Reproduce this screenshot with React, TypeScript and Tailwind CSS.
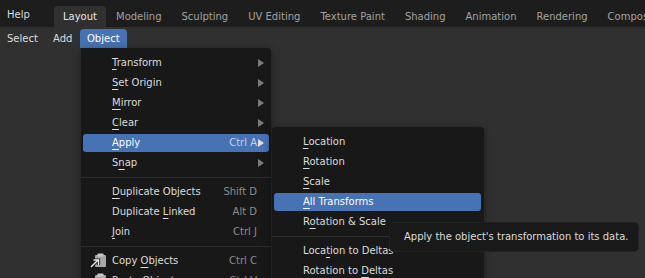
import React from "react";

type Item = {
  label: string;
  key?: number; // index of the underlined accelerator char
  shortcut?: string;
  sub?: boolean;
  active?: boolean;
  icon?: "copy" | "paste";
};

const objectMenu: (Item | "sep")[] = [
  { label: "Transform", key: 0, sub: true },
  { label: "Set Origin", key: 0, sub: true },
  { label: "Mirror", key: 0, sub: true },
  { label: "Clear", key: 0, sub: true },
  { label: "Apply", key: 0, shortcut: "Ctrl A", sub: true, active: true },
  { label: "Snap", key: 1, sub: true },
  "sep",
  { label: "Duplicate Objects", key: 0, shortcut: "Shift D" },
  { label: "Duplicate Linked", key: 10, shortcut: "Alt D" },
  { label: "Join", key: 0, shortcut: "Ctrl J" },
  "sep",
  { label: "Copy Objects", key: 5, shortcut: "Ctrl C", icon: "copy" },
  { label: "Paste Objects", key: 0, shortcut: "Ctrl V", icon: "paste" },
];

const applyMenu: (Item | "sep")[] = [
  { label: "Location", key: 0 },
  { label: "Rotation", key: 0 },
  { label: "Scale", key: 0 },
  { label: "All Transforms", key: 0, active: true },
  { label: "Rotation & Scale", key: 1 },
  "sep",
  { label: "Location to Deltas", key: 4 },
  { label: "Rotation to Deltas", key: 12 },
];

const tabs = ["Layout", "Modeling", "Sculpting", "UV Editing", "Texture Paint", "Shading", "Animation", "Rendering", "Compositing"];

function Label({ text, k }: { text: string; k?: number }) {
  if (k === undefined) return <span>{text}</span>;
  return (
    <span className="whitespace-pre">
      {text.slice(0, k)}
      <span className="underline decoration-1 underline-offset-[3px]">{text[k]}</span>
      {text.slice(k + 1)}
    </span>
  );
}

function ClipboardIcon({ arrow }: { arrow?: boolean }) {
  return (
    <svg width="18" height="16" viewBox="0 0 18 16" className="absolute left-[6px] top-[1px]">
      <rect x="6" y="2" width="11" height="12" rx="1.2" fill="#a8a8a8" />
      <rect x="8.5" y="0.5" width="6" height="3" rx="0.8" fill="#c8c8c8" />
      {arrow && (
        <>
          <path d="M2 14 L9 7" stroke="#181818" strokeWidth="3.2" />
          <path d="M4.5 7 H9.5 V12" stroke="#181818" strokeWidth="3.2" fill="none" />
          <path d="M2 14 L9 7" stroke="#ececec" strokeWidth="1.4" />
          <path d="M4.5 7 H9.5 V12" stroke="#ececec" strokeWidth="1.4" fill="none" />
        </>
      )}
    </svg>
  );
}

function Arrow({ light }: { light?: boolean }) {
  return (
    <svg width="6" height="8" viewBox="0 0 6 8" className="absolute right-[5px] top-[5px]">
      <path d="M0 0 L6 4 L0 8 Z" fill={light ? "#e0e0e0" : "#7c7c7c"} />
    </svg>
  );
}

function Menu({ items, right }: { items: (Item | "sep")[]; right: string }) {
  return (
    <div className="flex flex-col pt-[5px]">
      {items.map((it, i) =>
        it === "sep" ? (
          <div key={i} className="h-[9px] flex items-center">
            <div className="h-px w-full bg-[#2e2e2e]" />
          </div>
        ) : (
          <div key={i} className={`h-5 py-px pl-[2px] ${right}`}>
            <div
              className={`relative h-full flex items-center rounded-[3px] pl-[29px] pr-[12px] ${
                it.active ? "bg-[#4772b3] text-white" : "text-[#dcdcdc]"
              }`}
            >
              {it.icon && <ClipboardIcon arrow={it.icon === "copy"} />}
              <span className="flex-1">
                <Label text={it.label} k={it.key} />
              </span>
              {it.shortcut && (
                <span className={it.active ? "text-[#c6d3e8]" : "text-[#8c8c8c]"}>{it.shortcut}</span>
              )}
              {it.sub && <Arrow light={it.active} />}
            </div>
          </div>
        )
      )}
    </div>
  );
}

export default function App() {
  return (
    <div
      className="relative w-[645px] h-[278px] overflow-hidden flex flex-col bg-[#303030] text-[10px] leading-none text-[#dcdcdc]"
      style={{ fontFamily: '"DejaVu Sans", sans-serif' }}
    >
      {/* top bar */}
      <div className="h-[27px] bg-[#1d1d1d] flex items-end shrink-0 whitespace-nowrap">
        <div className="self-start pt-[10px] pl-[7px] w-[54px] shrink-0">Help</div>
        {tabs.map((t) => (
          <div
            key={t}
            className={`h-[21px] shrink-0 flex items-center pt-[1px] ${
              t === "Layout" ? "bg-[#303030] rounded-t-[4px] text-[#e6e6e6] px-[9px]" : "text-[#a2a2a2] px-[10px]"
            }`}
          >
            {t}
          </div>
        ))}
      </div>

      {/* header */}
      <div className="h-[21px] flex items-end pl-[7px] shrink-0">
        <div className="h-[19px] flex items-center w-[46px]">Select</div>
        <div className="h-[19px] flex items-center w-[27px]">Add</div>
        <div className="h-[19px] flex items-center px-[7px] bg-[#4772b3] rounded-t-[4px] text-white">Object</div>
      </div>

      <div className="flex-1" />

      {/* object menu */}
      <div className="absolute left-[81px] top-[48px] w-[190px] h-[240px] bg-[#181818] rounded-tr-[4px] shadow-[0_2px_8px_rgba(0,0,0,0.4)]">
        <Menu items={objectMenu} right="pr-[2px]" />
      </div>

      {/* apply submenu */}
      <div className="absolute left-[272px] top-[127px] w-[212px] h-[160px] bg-[#181818] rounded-[4px] shadow-[0_2px_8px_rgba(0,0,0,0.4)]">
        <Menu items={applyMenu} right="pr-[3px]" />
      </div>

      {/* tooltip */}
      <div className="absolute left-[389px] top-[222px] w-[250px] h-[30px] bg-[#191919] rounded-[5px] border border-[#222] flex items-center pl-[14px] text-[#dcdcdc] whitespace-nowrap">
        Apply the object's transformation to its data.
      </div>
    </div>
  );
}
